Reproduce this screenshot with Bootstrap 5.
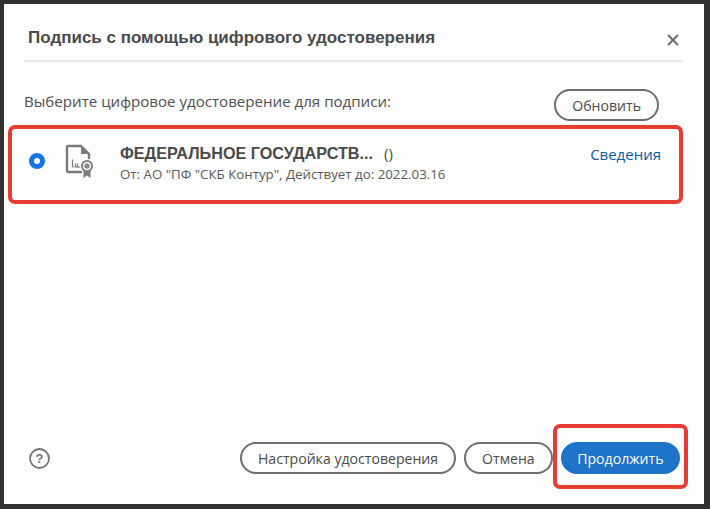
<!DOCTYPE html>
<html lang="ru">
<head>
<meta charset="utf-8">
<title>Подпись</title>
<link href="https://cdn.jsdelivr.net/npm/bootstrap@5.3.0/dist/css/bootstrap.min.css" rel="stylesheet">
<style>
html,body{height:100%;margin:0}
body{background:#323232;font-family:"Open Sans","Liberation Sans",sans-serif;color:#4b4b4b;overflow:hidden}
.shell{width:710px;height:509px;padding:4px 6px 5px 4px;position:relative}
.dlg{height:500px;background:#fdfdfd;padding:0 21px 0 20px}
.dlg-head{height:58px;border-bottom:2px solid #eaeaea;padding:12px 0 0 4px}
.dlg-title{font:700 17px "Liberation Sans",Arial,sans-serif;color:#4b4b4b;margin:0}
.close-x{width:12px;height:12px;margin:4px 4px 0 0}
.pick-row{margin-top:26px;height:34px}
.pick-label{font-size:15.1px;color:#505050;position:relative;top:-4px}
.pill{border:2px solid #6e6e6e;border-radius:16px;background:#fdfdfd;color:#4b4b4b;font-size:14.1px;line-height:27px;height:32px;padding:0 16px;white-space:nowrap}
.pill-top{margin-right:24px}
.pill-go{background:#1f73c9;border-color:#1f73c9;color:#fff;padding:0 14.5px}
.pick-item{height:72px;padding:0 22px 0 5px;margin-top:6px}
.radio-dot{width:16px;height:16px;border-radius:50%;border:5px solid #1473e6;background:#fff;flex:none;margin-top:-7px}
.cert-ico{width:28px;height:36px;margin-left:20px;margin-top:-8px;flex:none}
.cert-text{margin-left:27px}
.cert-name{font:700 16.2px "Liberation Sans",Arial,sans-serif;color:#4b4b4b;line-height:18px;white-space:nowrap}
.cert-paren{font:400 15px "Open Sans",sans-serif;margin-left:11px}
.cert-sub{font-size:13.3px;line-height:18px;color:#5a5a5a;white-space:nowrap;margin-top:2px;margin-bottom:2px}
.details{color:#0d5aa7;font-size:15px;margin-top:-20px}
.dlg-foot{height:92px;padding:0 3px 0 5px;margin-top:auto}
.help-ico{width:21px;height:21px}
.note-box{position:absolute;border:4px solid #e63c32;border-radius:7px;pointer-events:none}
.note-a{left:8px;top:125px;width:675px;height:79px}
.note-b{left:553px;top:424px;width:135px;height:65px}
</style>
</head>
<body>
<div class="shell">
  <div class="dlg d-flex flex-column">
    <div class="dlg-head d-flex justify-content-between align-items-center">
      <h1 class="dlg-title">Подпись с помощью цифрового удостоверения</h1>
      <svg class="close-x" viewBox="0 0 12 12" aria-label="Закрыть"><path d="M1 1 11 11M11 1 1 11" stroke="#6e6e6e" stroke-width="2" fill="none"/></svg>
    </div>
    <div class="pick-row d-flex justify-content-between align-items-center">
      <span class="pick-label">Выберите цифровое удостоверение для подписи:</span>
      <button class="pill pill-top" type="button">Обновить</button>
    </div>
    <div class="pick-item d-flex align-items-center">
      <span class="radio-dot"></span>
      <svg class="cert-ico" viewBox="0 0 28 36" fill="none">
        <path d="M17 30H3.500A1.500 1.500 0 0 1 2 28.500V5.500A1.500 1.500 0 0 1 3.500 4H16L24 12V17" stroke="#7b7b7b" stroke-width="2.400"/>
        <path d="M16 4V12H24Z" fill="#7b7b7b"/>
        <path d="M7.500 25V17.500M7.500 25H9.500M10.500 21.500V24.500C10.500 25.500 12.500 25.500 12.500 24.500V21.500V24.500C12.500 25.500 14.500 25.500 15 24.500" stroke="#7b7b7b" stroke-width="1.200"/>
        <path d="M18.500 28V36L22 33.500 25.500 36V28Z" fill="#7b7b7b"/>
        <circle cx="22" cy="24" r="6" fill="#7b7b7b"/>
        <circle cx="22" cy="24" r="4.200" fill="#fdfdfd"/>
        <circle cx="22" cy="24" r="2.700" fill="#8a8a8a"/>
      </svg>
      <div class="cert-text flex-grow-1">
        <div class="cert-name">ФЕДЕРАЛЬНОЕ ГОСУДАРСТВ...<span class="cert-paren">()</span></div>
        <div class="cert-sub">От: АО "ПФ "СКБ Контур", Действует до: 2022.03.16</div>
      </div>
      <a class="details text-decoration-none" href="#">Сведения</a>
    </div>
    <div class="dlg-foot d-flex justify-content-between align-items-center">
      <svg class="help-ico" viewBox="0 0 21 21" fill="none" aria-label="Справка">
        <circle cx="10.500" cy="10.500" r="9.500" stroke="#757575" stroke-width="1.800"/>
        <text x="10.500" y="15" text-anchor="middle" font-family="Liberation Sans" font-weight="700" font-size="13" fill="#757575">?</text>
      </svg>
      <div class="d-flex gap-2">
        <button class="pill" type="button">Настройка удостоверения</button>
        <button class="pill" type="button">Отмена</button>
        <button class="pill pill-go" type="button">Продолжить</button>
      </div>
    </div>
  </div>
  <div class="note-box note-a"></div>
  <div class="note-box note-b"></div>
</div>
<script src="https://cdn.jsdelivr.net/npm/bootstrap@5.3.0/dist/js/bootstrap.bundle.min.js"></script>
</body>
</html>
